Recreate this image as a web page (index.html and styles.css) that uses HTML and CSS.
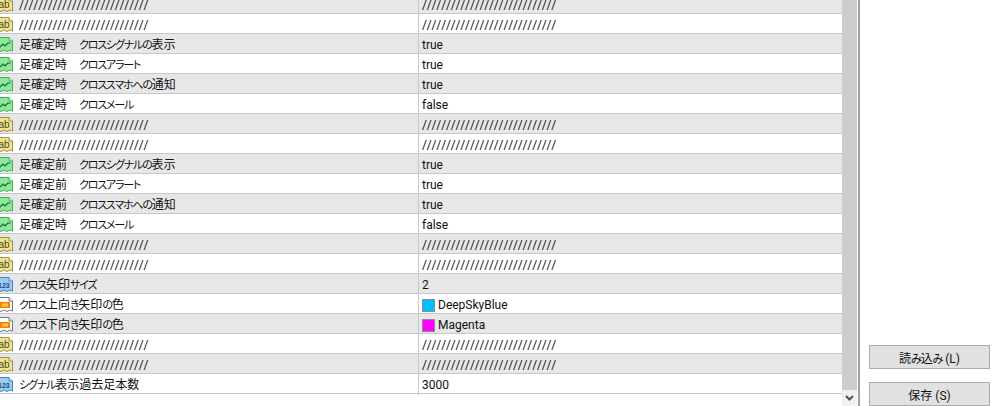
FILE: index.html
```html
<!DOCTYPE html>
<html lang="en">
<head>
    <meta charset="UTF-8">
    <title>Inputs</title>
    <link rel="stylesheet" href="styles.css">
</head>
<body>
    <!-- Icon set used by the rows -->
    <svg class="defs" width="0" height="0">
        <symbol id="icon-ab" viewBox="0 0 17 17">
            <path d="M0.5 1.5H12L15.5 5V15L13 14L10 15.5L7 14L4 15.5L0.5 14Z" fill="#f3e48c" stroke="#9a8f4c"/>
            <path d="M12 1.5V5H15.5" fill="#fff8cc" stroke="#9a8f4c"/>
            <text x="1.5" y="12" class="icon-text">ab</text>
        </symbol>
        <symbol id="icon-bool" viewBox="0 0 17 17">
            <path d="M0.5 1.5H12L15.5 5V15L13 14L10 15.5L7 14L4 15.5L0.5 14Z" fill="#8fe89a" stroke="#3fb45a"/>
            <path d="M12 1.5V5H15.5" fill="#dcfadc" stroke="#3fb45a"/>
            <path d="M3 11L6 8L8 10L11 7H13.5" fill="none" stroke="#16623a" stroke-width="1.2"/>
        </symbol>
        <symbol id="icon-num" viewBox="0 0 17 17">
            <path d="M0.5 1.5H12L15.5 5V15L13 14L10 15.5L7 14L4 15.5L0.5 14Z" fill="#9ccbf0" stroke="#3f86c2"/>
            <path d="M12 1.5V5H15.5" fill="#e0f0fc" stroke="#3f86c2"/>
            <text x="1" y="12" class="icon-num-text">123</text>
        </symbol>
        <symbol id="icon-color" viewBox="0 0 17 17">
            <path d="M0.5 1.5H12L15.5 5V15L13 14L10 15.5L7 14L4 15.5L0.5 14Z" fill="#fff" stroke="#777"/>
            <path d="M12 1.5V5H15.5" fill="#eee" stroke="#777"/>
            <rect x="0" y="6" width="13" height="6" fill="#ff7a10"/>
            <rect x="5" y="7.5" width="6" height="3" fill="#ffd020"/>
        </symbol>
    </svg>

    <div class="window">
        <div class="grid">
            <div class="row alt"><div class="name slashes"><svg class="icon"><use href="#icon-ab"/></svg>///////////////////////////</div><div class="value slashes">////////////////////////////</div></div>
            <div class="row"><div class="name slashes"><svg class="icon"><use href="#icon-ab"/></svg>///////////////////////////</div><div class="value slashes">////////////////////////////</div></div>
            <div class="row alt"><div class="name"><svg class="icon"><use href="#icon-bool"/></svg><span>足確定時　<span class="kana">クロスシグナルの</span>表示</span></div><div class="value">true</div></div>
            <div class="row"><div class="name"><svg class="icon"><use href="#icon-bool"/></svg><span>足確定時　<span class="kana">クロスアラート</span></span></div><div class="value">true</div></div>
            <div class="row alt"><div class="name"><svg class="icon"><use href="#icon-bool"/></svg><span>足確定時　<span class="kana">クロススマホへの</span>通知</span></div><div class="value">true</div></div>
            <div class="row"><div class="name"><svg class="icon"><use href="#icon-bool"/></svg><span>足確定時　<span class="kana">クロスメール</span></span></div><div class="value">false</div></div>
            <div class="row alt"><div class="name slashes"><svg class="icon"><use href="#icon-ab"/></svg>///////////////////////////</div><div class="value slashes">////////////////////////////</div></div>
            <div class="row"><div class="name slashes"><svg class="icon"><use href="#icon-ab"/></svg>///////////////////////////</div><div class="value slashes">////////////////////////////</div></div>
            <div class="row alt"><div class="name"><svg class="icon"><use href="#icon-bool"/></svg><span>足確定前　<span class="kana">クロスシグナルの</span>表示</span></div><div class="value">true</div></div>
            <div class="row"><div class="name"><svg class="icon"><use href="#icon-bool"/></svg><span>足確定前　<span class="kana">クロスアラート</span></span></div><div class="value">true</div></div>
            <div class="row alt"><div class="name"><svg class="icon"><use href="#icon-bool"/></svg><span>足確定前　<span class="kana">クロススマホへの</span>通知</span></div><div class="value">true</div></div>
            <div class="row"><div class="name"><svg class="icon"><use href="#icon-bool"/></svg><span>足確定時　<span class="kana">クロスメール</span></span></div><div class="value">false</div></div>
            <div class="row alt"><div class="name slashes"><svg class="icon"><use href="#icon-ab"/></svg>///////////////////////////</div><div class="value slashes">////////////////////////////</div></div>
            <div class="row"><div class="name slashes"><svg class="icon"><use href="#icon-ab"/></svg>///////////////////////////</div><div class="value slashes">////////////////////////////</div></div>
            <div class="row alt"><div class="name"><svg class="icon"><use href="#icon-num"/></svg><span><span class="kana">クロス</span>矢印<span class="kana">サイズ</span></span></div><div class="value">2</div></div>
            <div class="row"><div class="name"><svg class="icon"><use href="#icon-color"/></svg><span><span class="kana">クロス</span>上向<span class="kana">き</span>矢印<span class="kana">の</span>色</span></div><div class="value"><span class="swatch sky"></span>DeepSkyBlue</div></div>
            <div class="row alt"><div class="name"><svg class="icon"><use href="#icon-color"/></svg><span><span class="kana">クロス</span>下向<span class="kana">き</span>矢印<span class="kana">の</span>色</span></div><div class="value"><span class="swatch magenta"></span>Magenta</div></div>
            <div class="row"><div class="name slashes"><svg class="icon"><use href="#icon-ab"/></svg>///////////////////////////</div><div class="value slashes">////////////////////////////</div></div>
            <div class="row alt"><div class="name slashes"><svg class="icon"><use href="#icon-ab"/></svg>///////////////////////////</div><div class="value slashes">////////////////////////////</div></div>
            <div class="row"><div class="name"><svg class="icon"><use href="#icon-num"/></svg><span><span class="kana">シグナル</span>表示過去足本数</span></div><div class="value">3000</div></div>
        </div>

        <div class="scrollbar">
            <div class="scroll-down">
                <svg width="9" height="6" viewBox="0 0 9 6"><path d="M1 1L4.5 4.5L8 1" fill="none" stroke="#505050" stroke-width="2"/></svg>
            </div>
        </div>

        <div class="side">
            <button class="btn">読<span class="kana">み</span>込<span class="kana">み</span> (L)</button>
            <button class="btn">保存 (S)</button>
        </div>
    </div>
</body>
</html>
```

FILE: styles.css
```css
/* General Reset */
html, body {
    margin: 0;
    padding: 0;
    width: 100%;
    height: 100%;
    overflow: hidden;
    background: #ffffff;
    color: #111111;
    font-family: Roboto, "Noto Sans CJK JP", sans-serif;
    font-size: 12px;
}

.defs {
    display: block;
    height: 0;
}

/* Main layout */
.window {
    display: flex;
    height: 406px;
    overflow: hidden;
}

/* Property list, scrolled a few pixels past the top */
.grid {
    flex: 0 0 842px;
    margin-top: -6px;
}

.row {
    display: grid;
    grid-template-columns: 419px 1fr;
    height: 20px;
    box-sizing: border-box;
    border-bottom: 1px solid #c8c8c8;
    line-height: 19px;
    white-space: nowrap;
}

/* Stippled grey of the alternate rows */
.row.alt {
    background: repeating-conic-gradient(#e5e5e5 0 25%, #e9e9e9 0 50%) 0 0 / 2px 2px;
}

.name {
    display: flex;
    align-items: center;
    box-sizing: border-box;
    padding-top: 2px;
    border-right: 1px solid #c8c8c8;
    overflow: hidden;
    font-feature-settings: "palt";
}

.value {
    display: flex;
    align-items: center;
    box-sizing: border-box;
    padding: 2px 0 0 3px;
}

/* Narrow kana, as in the UI font of the original */
.kana {
    font-size: 11px;
    letter-spacing: -1.2px;
    font-feature-settings: "palt";
}

/* Filler rows made of slashes are a little wider than the font's own */
.slashes {
    letter-spacing: 1.15px;
}

/* Icons */
.icon {
    flex: none;
    width: 17px;
    height: 17px;
    margin-top: -2px;
    margin-left: -3px;
    margin-right: 5px;
}

.icon-text {
    font-family: "Liberation Sans", sans-serif;
    font-size: 10px;
    letter-spacing: 0;
    fill: #4a4520;
}

.icon-num-text {
    font-family: "Liberation Sans", sans-serif;
    font-size: 7px;
    font-weight: bold;
    letter-spacing: 0;
    fill: #1c4a78;
}

.swatch {
    flex: none;
    width: 11px;
    height: 11px;
    margin-right: 3px;
    border: 1px solid #8c8c8c;
}

.sky {
    background: #00bfff;
}

.magenta {
    background: #ff00ff;
}

/* Scrollbar */
.scrollbar {
    flex: 0 0 15px;
    display: flex;
    flex-direction: column;
    justify-content: flex-end;
    background: #cdcdcd;
}

.scroll-down {
    display: flex;
    align-items: center;
    justify-content: center;
    height: 16px;
    background: #f0f0f0;
}

/* Right panel */
.side {
    flex: 1;
    display: flex;
    flex-direction: column;
    justify-content: flex-end;
    gap: 13px;
    margin-left: 1px;
    padding-left: 9px;
    border-left: 2px solid #a0a0a0;
}

.btn {
    width: 121px;
    height: 24px;
    padding: 0;
    font-family: inherit;
    font-size: 12px;
    color: #111111;
    background: repeating-conic-gradient(#dfdfdf 0 25%, #e3e3e3 0 50%) 0 0 / 2px 2px;
    border: 1px solid #adadad;
}
```
